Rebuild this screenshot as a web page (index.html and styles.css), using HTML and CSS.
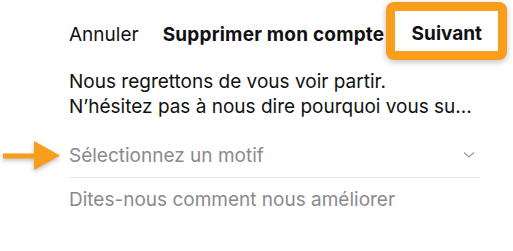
FILE: index.html
```html
<!DOCTYPE html>
<html lang="fr">
<head>
<meta charset="utf-8">
<link rel="stylesheet" href="styles.css">
</head>
<body>
<div class="screen">
  <header class="bar">
    <span class="cancel">Annuler</span>
    <span class="title">Supprimer mon compte</span>
    <span class="next">Suivant</span>
  </header>
  <main class="content">
    <p class="intro">Nous regrettons de vous voir partir.<br>N’hésitez pas à nous dire pourquoi vous su...</p>
    <div class="select">
      <svg class="arrow" width="62" height="36" viewBox="0 0 62 36">
        <rect x="3" y="15.5" width="34" height="5" fill="#f99d1c"/>
        <polygon points="34,3 60,17.5 34,32" fill="#f99d1c"/>
      </svg>
      <span class="placeholder">Sélectionnez un motif</span>
      <svg class="chev" width="12" height="8" viewBox="0 0 12 8">
        <polyline points="1,1.5 6,6 11,1.5" fill="none" stroke="#9a9a9e" stroke-width="1.2"/>
      </svg>
    </div>
    <div class="feedback">Dites-nous comment nous améliorer</div>
  </main>
</div>
</body>
</html>
```
FILE: styles.css
```css
html, body {
  margin: 0;
  padding: 0;
  background: #ffffff;
}
body {
  font-family: "Inter", "Liberation Sans", sans-serif;
  color: #111111;
  width: 513px;
  height: 251px;
  overflow: hidden;
}
.screen {
  width: 513px;
}
.bar {
  display: flex;
  align-items: center;
  height: 60px;
  padding-left: 69px;
  font-size: 19px;
}
.cancel {
  font-weight: 400;
  margin-right: 24px;
  padding-top: 8px;
}
.title {
  font-weight: 700;
  letter-spacing: 0.2px;
  padding-top: 8px;
}
.next {
  margin-left: 2px;
  box-sizing: border-box;
  width: 121px;
  height: 58px;
  margin-top: 1px;
  padding-top: 6px;
  border: 9px solid #f99d1c;
  border-radius: 8px;
  display: flex;
  align-items: center;
  justify-content: center;
  font-weight: 700;
  background: #fff;
  box-shadow: 0 2px 6px rgba(0,0,0,0.25);
}
.content {
  padding: 0 33px 0 69px;
}
.intro {
  margin: 9px 0 0;
  font-size: 19px;
  line-height: 25px;
}
.select {
  position: relative;
  display: flex;
  align-items: center;
  height: 44px;
  margin-top: 14px;
  border-bottom: 1px solid #e4e4e6;
  font-size: 19px;
  color: #8a8a8e;
}
.arrow {
  position: absolute;
  left: -69px;
  top: 5px;
  filter: drop-shadow(0 2px 2px rgba(0,0,0,0.25));
}
.placeholder {
  flex: 1;
}
.chev {
  margin-right: 5px;
}
.feedback {
  font-size: 19px;
  color: #8a8a8e;
  padding-top: 10px;
}
```
